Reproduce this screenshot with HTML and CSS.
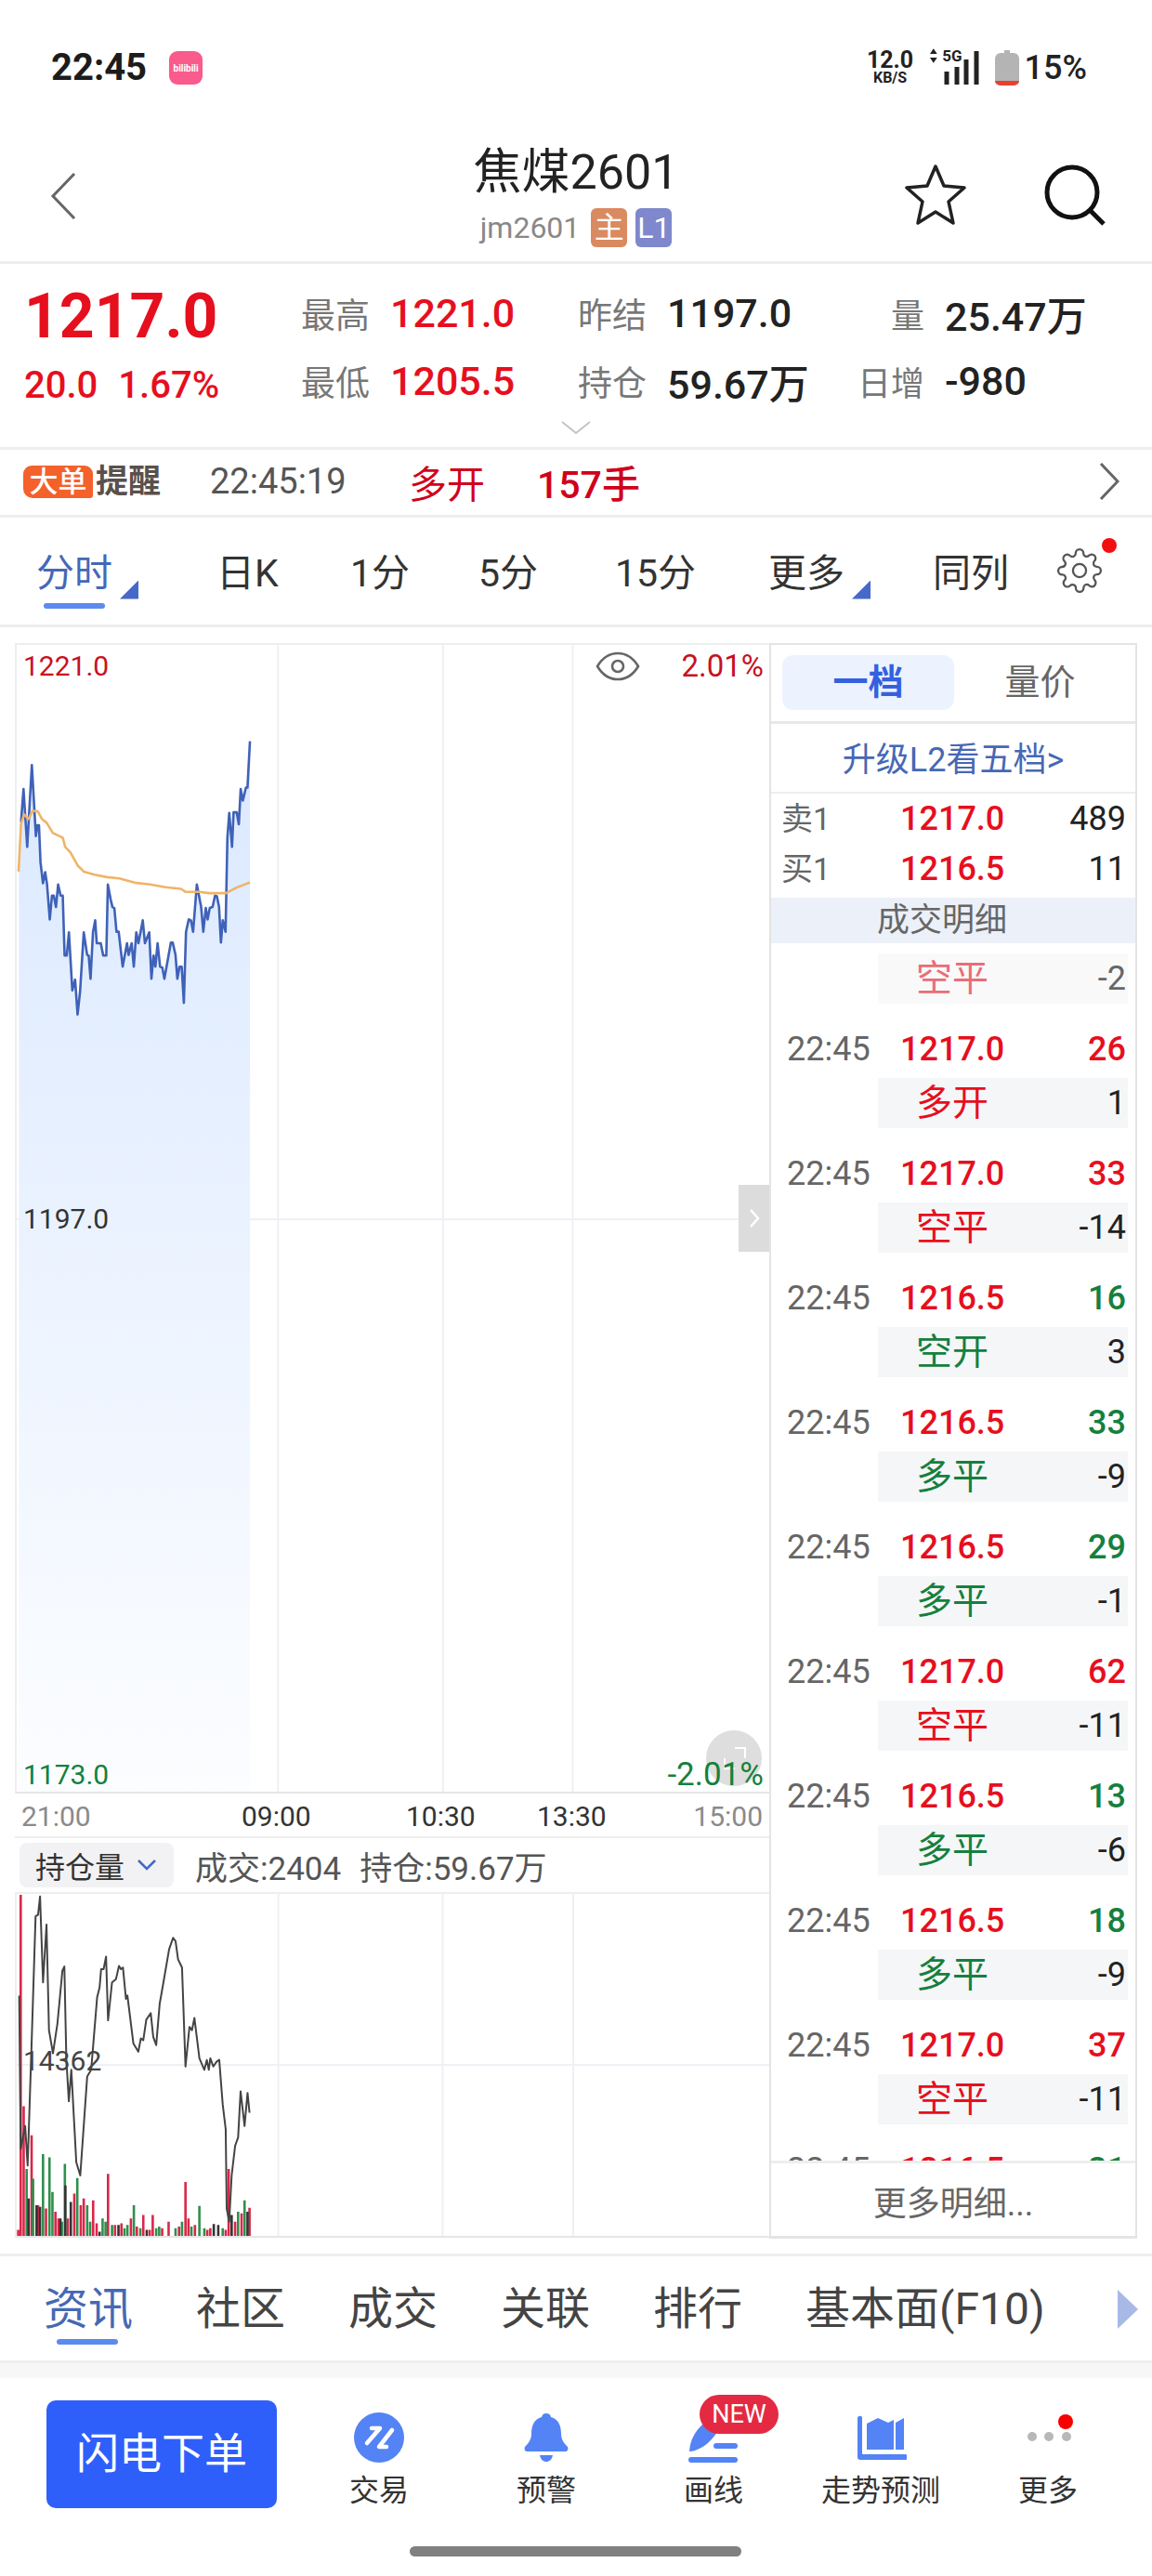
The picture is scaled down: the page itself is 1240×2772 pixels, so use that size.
FILE: index.html
```html
<!DOCTYPE html>
<html lang="zh-CN">
<head>
    <meta charset="UTF-8">
    <meta name="viewport" content="width=device-width, initial-scale=1.0">
    <title>焦煤2601</title>
    <link rel="stylesheet" href="styles.css">
</head>
<body>
    <div class="statusbar">
        <span class="clock">22:45</span>
        <span class="app-icon">bilibili</span>
        <div class="status-right">
            <div class="speed"><b>12.0</b><i>KB/S</i></div>
            <div class="net">
                <svg width="10" height="16" viewBox="0 0 10 16"><path d="M5 0l4 6H1zM5 16l4-6H1z" fill="#222"/></svg>
                <span>5G</span>
            </div>
            <svg class="signal" width="40" height="36" viewBox="0 0 40 36"><path d="M3 36V22M14 36V17M24 36V9M35 36V0" stroke="#222" stroke-width="5"/></svg>
            <svg class="battery" width="26" height="38" viewBox="0 0 26 38"><path d="M10 0h6v3h4a6 6 0 0 1 6 6v23a6 6 0 0 1-6 6H6a6 6 0 0 1-6-6V9a6 6 0 0 1 6-6h4z" fill="#b4b4b4"/><path d="M0 33h26a6 5 0 0 1-6 5H6a6 5 0 0 1-6-5z" fill="#e8412f"/></svg>
            <span class="pct">15%</span>
        </div>
    </div>

    <div class="header">
        <div class="header-left">
            <svg width="28" height="50" viewBox="0 0 28 50"><path d="M26 1L3 25l23 24" fill="none" stroke="#666" stroke-width="3"/></svg>
        </div>
        <div class="header-mid">
            <div class="title">焦煤2601</div>
            <div class="sub">
                <span class="code">jm2601</span>
                <span class="badge badge-main">主</span>
                <span class="badge badge-l1">L1</span>
            </div>
        </div>
        <div class="header-right">
            <svg width="68" height="68" viewBox="0 0 68 68"><path d="M34 3l9 21 22 2-17 15 5 23-19-12-19 12 5-23L3 26l22-2z" fill="none" stroke="#222" stroke-width="3.5" stroke-linejoin="round"/></svg>
            <svg width="68" height="68" viewBox="0 0 68 68"><circle cx="31" cy="31" r="27" fill="none" stroke="#111" stroke-width="5"/><path d="M50 50l15 15" stroke="#111" stroke-width="5"/></svg>
        </div>
    </div>

    <div class="stats">
        <div class="stat-grid">
            <div class="last">1217.0</div>
            <div class="stat"><span class="lbl">最高</span><span class="val up">1221.0</span></div>
            <div class="stat"><span class="lbl">昨结</span><span class="val">1197.0</span></div>
            <div class="stat stat-end"><span class="lbl">量</span><span class="val">25.47万</span></div>
            <div class="change"><span>20.0</span><span>1.67%</span></div>
            <div class="stat"><span class="lbl">最低</span><span class="val up">1205.5</span></div>
            <div class="stat"><span class="lbl">持仓</span><span class="val">59.67万</span></div>
            <div class="stat stat-end"><span class="lbl">日增</span><span class="val">-980</span></div>
        </div>
        <svg class="stats-more" width="32" height="14" viewBox="0 0 32 14"><path d="M1 1l15 12L31 1" fill="none" stroke="#c4c4c4" stroke-width="2"/></svg>
    </div>

    <div class="alert">
        <span class="alert-logo"><b>大单</b><em>提醒</em></span>
        <span class="alert-time">22:45:19</span>
        <span class="alert-kind">多开</span>
        <span class="alert-num">157手</span>
        <svg class="alert-go" width="22" height="40" viewBox="0 0 22 40"><path d="M2 1l18 19L2 39" fill="none" stroke="#666" stroke-width="3"/></svg>
    </div>

    <div class="periods">
        <div class="period active">分时<i class="corner"></i><i class="bar"></i></div>
        <div class="period">日K</div>
        <div class="period">1分</div>
        <div class="period">5分</div>
        <div class="period">15分</div>
        <div class="period">更多<i class="corner"></i></div>
        <div class="period">同列</div>
        <div class="gear">
            <svg width="50" height="50" viewBox="0 0 24 24" fill="none" stroke="#555" stroke-width="1.1"><circle cx="12" cy="12" r="3.4"/><path d="M19.4 15a1.65 1.65 0 0 0 .33 1.82l.06.06a2 2 0 1 1-2.83 2.83l-.06-.06a1.65 1.65 0 0 0-1.82-.33 1.65 1.65 0 0 0-1 1.51V21a2 2 0 1 1-4 0v-.09A1.65 1.65 0 0 0 9 19.4a1.65 1.65 0 0 0-1.82.33l-.06.06a2 2 0 1 1-2.83-2.83l.06-.06a1.65 1.65 0 0 0 .33-1.82 1.65 1.65 0 0 0-1.51-1H3a2 2 0 1 1 0-4h.09A1.65 1.65 0 0 0 4.6 9a1.65 1.65 0 0 0-.33-1.82l-.06-.06a2 2 0 1 1 2.83-2.83l.06.06a1.65 1.65 0 0 0 1.82.33H9a1.65 1.65 0 0 0 1-1.51V3a2 2 0 1 1 4 0v.09a1.65 1.65 0 0 0 1 1.51 1.65 1.65 0 0 0 1.82-.33l.06-.06a2 2 0 1 1 2.83 2.83l-.06.06a1.65 1.65 0 0 0-.33 1.82V9a1.65 1.65 0 0 0 1.51 1H21a2 2 0 1 1 0 4h-.09a1.65 1.65 0 0 0-1.51 1z"/></svg>
            <i class="gear-dot"></i>
        </div>
    </div>

    <div class="market">
        <div class="charts">
            <div class="price-chart">
                <svg class="plot" viewBox="48 36 2436 3714" preserveAspectRatio="none">
                    <defs>
                        <linearGradient id="area" x1="0" y1="0" x2="0" y2="1">
                            <stop offset="0" stop-color="#dbe9ff"/>
                            <stop offset="1" stop-color="#fcfdff"/>
                        </linearGradient>
                    </defs>
                    <path class="grid" d="M894 36V3750M1428 36V3750M1848 36V3750M48 1896H2484"/>
                    <polygon fill="url(#area)" points="55,770 62,610 70,503 82,690 97,425 110,655 115,620 120,620 125,740 133,808 140,772 146,810 155,925 162,848 168,848 175,885 182,812 190,848 197,848 203,1042 210,1042 217,967 228,1155 237,1120 245,1233 253,1160 265,967 276,1040 281,1042 287,1117 295,965 302,928 307,1002 320,1002 328,1042 338,1042 343,812 352,860 358,885 364,888 371,965 378,965 391,1078 405,1002 410,1040 420,1002 427,1078 435,967 442,1002 456,928 463,1002 477,967 484,1117 491,1042 497,1078 504,1002 512,1078 519,1080 526,1117 547,1000 553,1000 562,1040 568,1117 575,1078 582,1078 589,1195 596,965 605,925 612,928 619,965 631,812 645,885 652,965 660,888 666,925 673,888 682,885 690,848 696,850 703,885 709,1000 715,928 724,965 730,660 736,580 745,690 750,578 760,578 767,617 773,503 780,540 790,498 795,498 803,348 803,3750 55,3750"/>
                    <polyline class="line-price" points="62,610 70,503 82,690 97,425 110,655 115,620 120,620 125,740 133,808 140,772 146,810 155,925 162,848 168,848 175,885 182,812 190,848 197,848 203,1042 210,1042 217,967 228,1155 237,1120 245,1233 253,1160 265,967 276,1040 281,1042 287,1117 295,965 302,928 307,1002 320,1002 328,1042 338,1042 343,812 352,860 358,885 364,888 371,965 378,965 391,1078 405,1002 410,1040 420,1002 427,1078 435,967 442,1002 456,928 463,1002 477,967 484,1117 491,1042 497,1078 504,1002 512,1078 519,1080 526,1117 547,1000 553,1000 562,1040 568,1117 575,1078 582,1078 589,1195 596,965 605,925 612,928 619,965 631,812 645,885 652,965 660,888 666,925 673,888 682,885 690,848 696,850 703,885 709,1000 715,928 724,965 730,660 736,580 745,690 750,578 760,578 767,617 773,503 780,540 790,498 795,498 803,348"/>
                    <polyline class="line-avg" points="54,770 62,615 72,585 86,600 100,573 116,575 130,600 145,612 165,645 197,660 205,690 222,708 245,750 265,770 300,780 340,788 380,792 430,806 480,812 530,821 580,826 595,836 640,836 670,840 725,840 760,822 803,805"/>
                </svg>
                <span class="ylabel top-left up-dark">1221.0</span>
                <span class="ylabel pct-label top-right up-dark">2.01%</span>
                <span class="ylabel mid-left">1197.0</span>
                <i class="fullscreen"></i>
                <span class="ylabel bottom-left down">1173.0</span>
                <span class="ylabel pct-label bottom-right down">-2.01%</span>
                <svg class="eye" width="48" height="32" viewBox="0 0 48 32" fill="none" stroke="#666" stroke-width="2.6"><path d="M2 16C8 6 15 2 24 2s16 4 22 14c-6 10-13 14-22 14S8 26 2 16z"/><circle cx="24" cy="16" r="6"/></svg>
                <div class="side-tab"><svg width="12" height="22" viewBox="0 0 12 22"><path d="M2 2l8 9-8 9" fill="none" stroke="#fff" stroke-width="2.5"/></svg></div>
            </div>
            <div class="axis">
                <span class="axis-end">21:00</span>
                <span class="axis-a">09:00</span>
                <span class="axis-b">10:30</span>
                <span class="axis-c">13:30</span>
                <span class="axis-end axis-d">15:00</span>
            </div>
            <div class="vol-head">
                <div class="vol-select">持仓量<svg width="22" height="14" viewBox="0 0 22 14"><path d="M2 2l9 9 9-9" fill="none" stroke="#4668c8" stroke-width="2.6"/></svg></div>
                <span>成交:2404</span>
                <span>持仓:59.67万</span>
            </div>
            <div class="vol-chart">
                <svg class="plot" viewBox="30 497 1516 1036" preserveAspectRatio="none">
                    <path class="grid" d="M557 497V1533M888 497V1533M1151 497V1533M30 1015H1546"/>
                    <path class="bars bar-red" d="M38 1533V500M33 1533V1515M44 1533V1140M60 1533V1228M73 1533V1440M89 1533V1450M108 1533V1460M114 1533V1480M133 1533V1480M146 1533V1405M159 1533V1440M165 1533V1420M184 1533V1425M191 1533V1495M214 1533V1345M228 1533V1500M241 1533V1495M260 1533V1480M272 1533V1505M285 1533V1470M298 1533V1515M304 1533V1470M323 1533V1510M336 1533V1490M357 1533V1505M370 1533V1370M376 1533V1480M389 1533V1500M414 1533V1515M420 1533V1510M451 1533V1515M457 1533V1330M470 1533V1490M483 1533V1465M499 1533V1448"/>
                    <path class="bars bar-green" d="M50 1533V1330M63 1533V1360M83 1533V1285M96 1533V1295M102 1533V1400M121 1533V1490M127 1533V1315M152 1533V1358M172 1533V1440M178 1533V1490M203 1533V1480M209 1533V1490M222 1533V1500M247 1533V1510M253 1533V1500M266 1533V1440M279 1533V1510M311 1533V1510M317 1533V1505M350 1533V1510M363 1533V1490M382 1533V1505M398 1533V1442M408 1533V1510M445 1533V1510M476 1533V1460M489 1533V1425"/>
                    <path class="bars bar-dark" d="M54 1533V1420M70 1533V1440M77 1533V1445M118 1533V1480M128 1533V1380M139 1533V1430M197 1533V1520M235 1533V1500M292 1533V1515M427 1533V1497M436 1533V1500M463 1533V1470M495 1533V1460"/>
                    <polyline class="line-hold" points="35,805 38,1270 47,1200 52,1320 60,950 68,565 73,560 77,505 83,765 90,590 95,910 103,980 112,890 122,730 126,717 130,1000 135,1125 140,1030 150,1310 158,1350 165,1200 172,1050 180,1030 192,810 197,780 200,725 205,725 210,687 214,880 222,765 230,755 236,715 240,725 244,720 250,815 253,805 265,950 275,975 280,935 285,940 291,878 300,858 305,930 311,955 318,830 325,770 337,665 345,630 350,640 355,695 363,720 370,1020 378,900 383,910 388,873 398,995 408,1030 413,1000 417,1030 420,995 426,1020 433,1005 438,1000 445,1135 451,1210 453,1450 458,1490 463,1350 470,1260 476,1235 481,1095 489,1200 495,1100 499,1160"/>
                </svg>
                <span class="ylabel vol-label">14362</span>
            </div>
        </div>

        <div class="side">
            <div class="side-tabs">
                <div class="side-btn on">一档</div>
                <div class="side-btn">量价</div>
            </div>
            <div class="upgrade">升级L2看五档&gt;</div>
            <div class="quote"><span class="q-name">卖1</span><span class="q-price">1217.0</span><span class="q-size">489</span></div>
            <div class="quote"><span class="q-name">买1</span><span class="q-price">1216.5</span><span class="q-size">11</span></div>
            <div class="band">成交明细</div>
            <div class="trades">
                <div class="trade-sub faded"><span class="up">空平</span><span>-2</span></div>
                <div class="trade-top"><span class="t-time">22:45</span><span class="up">1217.0</span><span class="up">26</span></div>
                <div class="trade-sub"><span class="up">多开</span><span>1</span></div>
                <div class="trade-top"><span class="t-time">22:45</span><span class="up">1217.0</span><span class="up">33</span></div>
                <div class="trade-sub"><span class="up">空平</span><span>-14</span></div>
                <div class="trade-top"><span class="t-time">22:45</span><span class="up">1216.5</span><span class="down">16</span></div>
                <div class="trade-sub"><span class="down">空开</span><span>3</span></div>
                <div class="trade-top"><span class="t-time">22:45</span><span class="up">1216.5</span><span class="down">33</span></div>
                <div class="trade-sub"><span class="down">多平</span><span>-9</span></div>
                <div class="trade-top"><span class="t-time">22:45</span><span class="up">1216.5</span><span class="down">29</span></div>
                <div class="trade-sub"><span class="down">多平</span><span>-1</span></div>
                <div class="trade-top"><span class="t-time">22:45</span><span class="up">1217.0</span><span class="up">62</span></div>
                <div class="trade-sub"><span class="up">空平</span><span>-11</span></div>
                <div class="trade-top"><span class="t-time">22:45</span><span class="up">1216.5</span><span class="down">13</span></div>
                <div class="trade-sub"><span class="down">多平</span><span>-6</span></div>
                <div class="trade-top"><span class="t-time">22:45</span><span class="up">1216.5</span><span class="down">18</span></div>
                <div class="trade-sub"><span class="down">多平</span><span>-9</span></div>
                <div class="trade-top"><span class="t-time">22:45</span><span class="up">1217.0</span><span class="up">37</span></div>
                <div class="trade-sub"><span class="up">空平</span><span>-11</span></div>
                <div class="trade-top"><span class="t-time">22:45</span><span class="up">1216.5</span><span class="down">21</span></div>
            </div>
            <div class="more-trades">更多明细...</div>
        </div>
    </div>

    <div class="info-tabs">
        <div class="info-tab active">资讯<i class="bar"></i></div>
        <div class="info-tab">社区</div>
        <div class="info-tab">成交</div>
        <div class="info-tab">关联</div>
        <div class="info-tab">排行</div>
        <div class="info-tab">基本面(F10)</div>
        <svg class="info-next" width="22" height="42" viewBox="0 0 22 42"><path d="M0 0l22 21L0 42z" fill="#a9b9e6"/></svg>
    </div>
    <div class="gap-band"></div>

    <div class="bottombar">
        <div class="flash-btn">闪电下单</div>
        <div class="nav">
            <div class="nav-item">
                <svg width="56" height="60" viewBox="0 0 56 60"><circle cx="28" cy="28" r="27" fill="#5383f5"/><path d="M20 18h9L15 34M42 20L28 38h8" fill="none" stroke="#fff" stroke-width="4.5" stroke-linecap="round" stroke-linejoin="round"/></svg>
                <span>交易</span>
            </div>
            <div class="nav-item">
                <svg width="50" height="60" viewBox="0 0 50 60"><path d="M25 2c3 0 4 1 5 4 8 2 11 9 11 18 0 6 3 10 7 14 1 2 0 5-2 5H4c-2 0-3-3-2-5 4-4 7-8 7-14 0-9 3-16 11-18 1-3 2-4 5-4z" fill="#5383f5"/><path d="M18 47h14c-1 5-4 7-7 7s-6-2-7-7z" fill="#5383f5"/></svg>
                <span>预警</span>
            </div>
            <div class="nav-item">
                <svg width="56" height="60" viewBox="0 0 56 60"><path d="M2 43C3 30 8 22 16 14l16 8C26 32 14 42 2 43z" fill="#5383f5"/><rect x="28" y="34" width="26" height="6" rx="3" fill="#5383f5"/><rect x="1" y="49" width="53" height="6" rx="3" fill="#5383f5"/></svg>
                <span>画线</span>
                <b class="new-tag">NEW</b>
            </div>
            <div class="nav-item">
                <svg width="56" height="60" viewBox="0 0 56 60"><path d="M5 5a2 2 0 0 1 2 0 2 2 0 0 1 1 2v39h46a3 3 0 0 1 0 6H6a3 3 0 0 1-3-3V7a2 2 0 0 1 2-2z" fill="#5383f5"/><path d="M13 13l12-6 11 5 6-3v32H13zM44 12l9-5v34h-9z" fill="#5383f5"/></svg>
                <span>走势预测</span>
            </div>
            <div class="nav-item">
                <svg width="60" height="60" viewBox="0 0 60 60"><circle cx="13" cy="27" r="5" fill="#b8b8b8"/><circle cx="31" cy="27" r="5" fill="#b8b8b8"/><circle cx="50" cy="27" r="5" fill="#b8b8b8"/><circle cx="49" cy="11" r="8" fill="#f80000"/></svg>
                <span>更多</span>
            </div>
        </div>
    </div>
    <div class="home-bar"></div>
</body>
</html>
```

FILE: styles.css
```css
* {
    box-sizing: border-box;
}
body {
    margin: 0;
    width: 1240px;
    height: 2772px;
    overflow: hidden;
    background: #fff;
    color: #222;
    font-family: Roboto, "Noto Sans CJK SC", sans-serif;
}
i {
    font-style: normal;
}
.up { color: #e60f1e; }
.down { color: #15803d; }

/* status bar */
.statusbar {
    height: 140px;
    display: flex;
    align-items: center;
    padding: 5px 70px 0 55px;
}
.clock {
    font-size: 40px;
    font-weight: 700;
    color: #1c1c1c;
}
.app-icon {
    width: 36px;
    height: 36px;
    margin-left: 24px;
    background: #f95b8c;
    border-radius: 9px;
    color: #fff;
    font-size: 10px;
    font-weight: 700;
    line-height: 38px;
    text-align: center;
    overflow: hidden;
}
.status-right {
    margin-left: auto;
    display: flex;
    align-items: center;
}
.speed {
    width: 57px;
    display: flex;
    flex-direction: column;
    align-items: center;
}
.speed b {
    font-size: 25px;
    line-height: 22px;
    font-weight: 700;
}
.speed i {
    font-size: 16px;
    line-height: 15px;
    font-weight: 700;
}
.net {
    width: 36px;
    display: flex;
    align-items: center;
    align-self: flex-start;
    gap: 5px;
    margin-left: 13px;
    font-size: 17px;
    line-height: 16px;
    font-weight: 700;
}
.signal {
    margin-left: -20px;
}
.battery {
    margin-left: 15px;
}
.pct {
    margin-left: 6px;
    font-size: 36px;
    font-weight: 500;
}

/* title */
.header {
    height: 144px;
    display: grid;
    grid-template-columns: 1fr auto 1fr;
    border-bottom: 3px solid #eee;
}
.header-left {
    padding: 46px 0 0 54px;
}
.header-mid {
    padding-top: 14px;
    text-align: center;
}
.title {
    font-size: 52px;
    line-height: 64px;
    color: #222;
}
.sub {
    margin-top: 6px;
    display: flex;
    align-items: center;
    justify-content: center;
    gap: 9px;
}
.code {
    font-size: 32px;
    color: #888;
    margin-right: 3px;
}
.badge {
    width: 39px;
    height: 42px;
    border-radius: 6px;
    color: #fff;
    font-size: 32px;
    line-height: 42px;
    text-align: center;
}
.badge-main { background: #da8a60; }
.badge-l1 { background: #7f88cc; }
.header-right {
    padding: 36px 49px 0 0;
    display: flex;
    justify-content: flex-end;
    align-items: flex-start;
    gap: 82px;
}

/* quote summary */
.stats {
    height: 200px;
    padding: 16px 0 0 26px;
    border-bottom: 3px solid #eee;
}
.stat-grid {
    display: grid;
    grid-template-columns: 298px 298px 301px auto;
    grid-auto-rows: 73px;
    align-items: center;
}
.last {
    font-size: 66px;
    line-height: 80px;
    margin-top: 9px;
    font-weight: 700;
    color: #e60f1e;
}
.change {
    display: flex;
    gap: 22px;
    font-size: 40px;
    font-weight: 500;
    color: #e60f1e;
    margin-top: 10px;
}
.stat {
    display: flex;
    align-items: center;
    gap: 22px;
}
.lbl {
    font-size: 37px;
    color: #777;
}
.val {
    font-size: 43px;
    font-weight: 500;
    color: #222;
}
.val.up { color: #e60f1e; }
.stat-end .lbl {
    width: 72px;
    text-align: right;
    font-size: 36px;
}
.stats-more {
    display: block;
    margin: 7px 0 0 578px;
}

/* big order alert */
.alert {
    height: 73px;
    display: flex;
    align-items: center;
    padding: 0 0 2px 25px;
    border-bottom: 3px solid #eee;
}
.alert-logo {
    width: 148px;
    display: flex;
    align-items: center;
}
.alert-logo b {
    width: 75px;
    height: 35px;
    background: #f4612b;
    border-radius: 9px 9px 3px 10px;
    color: #fff;
    font-size: 31px;
    line-height: 35px;
    text-align: center;
    font-weight: 500;
}
.alert-logo em {
    margin-left: 3px;
    font-style: normal;
    font-weight: 700;
    color: #5a504b;
    font-size: 35px;
    line-height: 37px;
}
.alert-time {
    margin-left: 53px;
    font-size: 38px;
    color: #555;
    width: 214px;
}
.alert-kind {
    font-size: 41px;
    color: #d0021b;
    width: 138px;
}
.alert-num {
    font-size: 41px;
    font-weight: 500;
    color: #d0021b;
}
.alert-go {
    margin-left: auto;
    margin-right: 35px;
}

/* period tabs */
.periods {
    height: 118px;
    padding: 4px 0 0 39px;
    display: grid;
    grid-template-columns: 194px 144px 138px 147px 165px 177px 133px auto;
    align-items: center;
    border-bottom: 3px solid #eee;
}
.period {
    position: relative;
    font-size: 41px;
    line-height: 50px;
    color: #333;
}
.period.active {
    color: #4668b5;
}
.corner {
    position: absolute;
    left: 90px;
    top: 33px;
    width: 20px;
    height: 20px;
    background: #4668c8;
    clip-path: polygon(100% 0, 100% 100%, 0 100%);
}
.bar {
    position: absolute;
    height: 6px;
    background: #5b8bef;
    border-radius: 3px;
}
.period .bar {
    left: 8px;
    top: 57px;
    width: 66px;
}
.gear {
    position: relative;
    width: 50px;
    height: 50px;
    margin-top: -6px;
}
.gear-dot {
    position: absolute;
    left: 49px;
    top: -10px;
    width: 16px;
    height: 16px;
    border-radius: 50%;
    background: #f01010;
}

/* chart area */
.market {
    height: 1753px;
    padding: 17px 0 0 16px;
    display: flex;
    align-items: flex-start;
    border-bottom: 3px solid #eee;
}
.charts {
    width: 812px;
}
.price-chart {
    position: relative;
    height: 1238px;
    border-top: 2px solid #eee;
    border-left: 2px solid #eee;
    border-bottom: 2px solid #e6e6e6;
}
.plot {
    position: absolute;
    left: 0;
    top: 0;
    width: 100%;
    height: 100%;
}
.grid {
    fill: none;
    stroke: #eef0f5;
    stroke-width: 2px;
    vector-effect: non-scaling-stroke;
}
.line-price, .line-avg, .line-hold {
    fill: none;
    vector-effect: non-scaling-stroke;
    stroke-linejoin: round;
}
.line-price {
    stroke: #3f62b8;
    stroke-width: 2.6px;
}
.line-avg {
    stroke: #efb46a;
    stroke-width: 2.6px;
}
.line-hold {
    stroke: #444;
    stroke-width: 2px;
}
.bars {
    fill: none;
    stroke-width: 2.6px;
    vector-effect: non-scaling-stroke;
}
.bar-red { stroke: #d9274a; }
.bar-green { stroke: #2f8f4c; }
.bar-dark { stroke: #333; }
.ylabel {
    position: absolute;
    font-size: 30px;
    line-height: 36px;
    color: #333;
}
.ylabel.pct-label {
    font-size: 33px;
}
.ylabel.bottom-right {
    font-size: 35px;
}
.ylabel.up-dark { color: #c9101e; }
.ylabel.down { color: #15803d; }
.top-left { left: 7px; top: 5px; }
.top-right { right: 6px; top: 5px; }
.mid-left { left: 7px; top: 600px; }
.bottom-left { left: 7px; top: 1198px; }
.bottom-right { right: 6px; top: 1198px; }
.eye {
    position: absolute;
    left: 623px;
    top: 7px;
}
.side-tab {
    position: absolute;
    right: 0;
    top: 581px;
    width: 33px;
    height: 72px;
    background: #dcdcdc;
    display: flex;
    align-items: center;
    justify-content: center;
}
.fullscreen {
    position: absolute;
    left: 742px;
    top: 1168px;
    width: 60px;
    height: 60px;
    border-radius: 50%;
    background: #dedede;
}
.fullscreen::before, .fullscreen::after {
    content: "";
    position: absolute;
    width: 10px;
    height: 10px;
    border: 2px solid #fff;
}
.fullscreen::before {
    left: 31px;
    top: 18px;
    border-left: 0;
    border-bottom: 0;
}
.fullscreen::after {
    left: 19px;
    top: 30px;
    border-right: 0;
    border-top: 0;
}
.axis {
    position: relative;
    height: 48px;
    font-size: 30px;
    line-height: 50px;
    color: #333;
    border-bottom: 2px solid #eee;
}
.axis span {
    position: absolute;
    top: 0;
}
.axis-end { color: #8a8a8a; left: 7px; }
.axis-a { left: 244px; }
.axis-b { left: 421px; }
.axis-c { left: 562px; }
.axis .axis-d { left: auto; right: 7px; }
.vol-head {
    height: 60px;
    display: flex;
    align-items: center;
    gap: 20px;
    padding-left: 5px;
    font-size: 35px;
    color: #555;
    border-bottom: 2px solid #eee;
}
.vol-select {
    width: 166px;
    height: 48px;
    margin-right: 3px;
    background: #f2f2f4;
    border-radius: 8px;
    padding-left: 17px;
    display: flex;
    align-items: center;
    gap: 13px;
    font-size: 32px;
    color: #333;
}
.vol-chart {
    position: relative;
    height: 370px;
    border-left: 2px solid #eee;
    border-bottom: 2px solid #e6e6e6;
}
.vol-label {
    left: 7px;
    top: 162px;
    color: #444;
}

/* right panel */
.side {
    width: 396px;
    height: 1717px;
    border: 2px solid #e4e4e4;
    border-bottom-width: 3px;
    display: flex;
    flex-direction: column;
}
.side-tabs {
    height: 85px;
    display: flex;
    padding: 11px 0 0 12px;
    border-bottom: 3px solid #e8e8e8;
}
.side-btn {
    width: 185px;
    height: 59px;
    border-radius: 12px;
    text-align: center;
    font-size: 38px;
    line-height: 59px;
    color: #666;
}
.side-btn.on {
    background: #ecf2fe;
    color: #3560e0;
    font-weight: 700;
}
.upgrade {
    height: 75px;
    text-align: center;
    font-size: 36px;
    line-height: 78px;
    color: #4668b5;
    border-bottom: 2px solid #eee;
}
.quote {
    height: 54px;
    display: grid;
    grid-template-columns: 128px 1fr auto;
    padding: 0 10px 0 11px;
    font-size: 36px;
    line-height: 54px;
    align-items: center;
}
.q-name {
    color: #666;
    font-size: 34px;
}
.q-price {
    font-weight: 500;
    color: #e60f1e;
}
.q-size {
    color: #222;
}
.band {
    height: 49px;
    margin-top: 4px;
    background: #ecf0f8;
    text-align: center;
    padding-right: 24px;
    font-size: 35px;
    line-height: 49px;
    color: #666;
}
.trades {
    flex: 1;
    overflow: hidden;
    padding-top: 11px;
    font-size: 36px;
}
.trade-top {
    height: 80px;
    padding: 24px 10px 0 17px;
    display: grid;
    grid-template-columns: 122px 1fr auto;
    line-height: 50px;
    font-weight: 500;
}
.t-time {
    color: #666;
    font-weight: 400;
}
.trade-sub {
    height: 54px;
    margin: 0 8px 0 115px;
    padding: 0 2px 0 41px;
    background: #f5f6f8;
    display: flex;
    justify-content: space-between;
    line-height: 54px;
    color: #222;
}
.trade-sub span:first-child {
    font-size: 39px;
}
.faded {
    background: #f9f9f9;
}
.faded span {
    color: #666;
}
.faded span:first-child {
    color: #ea6d78;
}
.more-trades {
    height: 81px;
    border-top: 3px solid #eee;
    text-align: center;
    font-size: 36px;
    line-height: 88px;
    color: #666;
}

/* news tabs */
.info-tabs {
    height: 115px;
    padding: 1px 0 0 47px;
    display: flex;
    align-items: center;
    gap: 68px;
    position: relative;
    border-bottom: 3px solid #eee;
}
.info-tab {
    position: relative;
    font-size: 48px;
    line-height: 60px;
    color: #444;
}
.info-tab.active {
    color: #4668b5;
}
.info-tab .bar {
    left: 14px;
    top: 62px;
    width: 66px;
}
.info-next {
    position: absolute;
    left: 1203px;
    top: 36px;
}
.gap-band {
    height: 16px;
    background: #f7f7f7;
}

/* bottom */
.bottombar {
    display: flex;
    align-items: flex-start;
    height: 181px;
    padding-left: 50px;
}
.flash-btn {
    width: 248px;
    height: 116px;
    margin-top: 24px;
    background: #2f5ffb;
    border-radius: 10px;
    color: #fff;
    font-size: 46px;
    line-height: 114px;
    text-align: center;
}
.nav {
    margin-left: 20px;
    display: grid;
    grid-template-columns: repeat(5, 180px);
}
.nav-item {
    position: relative;
    padding-top: 36px;
    display: flex;
    flex-direction: column;
    align-items: center;
    font-size: 32px;
    line-height: 50px;
    color: #333;
}
.nav-item svg {
    display: block;
}
.new-tag {
    position: absolute;
    left: 75px;
    top: 18px;
    width: 85px;
    height: 42px;
    background: #e32a42;
    border-radius: 21px;
    color: #fff;
    font-size: 27px;
    font-weight: 400;
    line-height: 42px;
    text-align: center;
}
.home-bar {
    width: 357px;
    height: 11px;
    margin-left: 441px;
    background: #808080;
    border-radius: 6px;
}
```
